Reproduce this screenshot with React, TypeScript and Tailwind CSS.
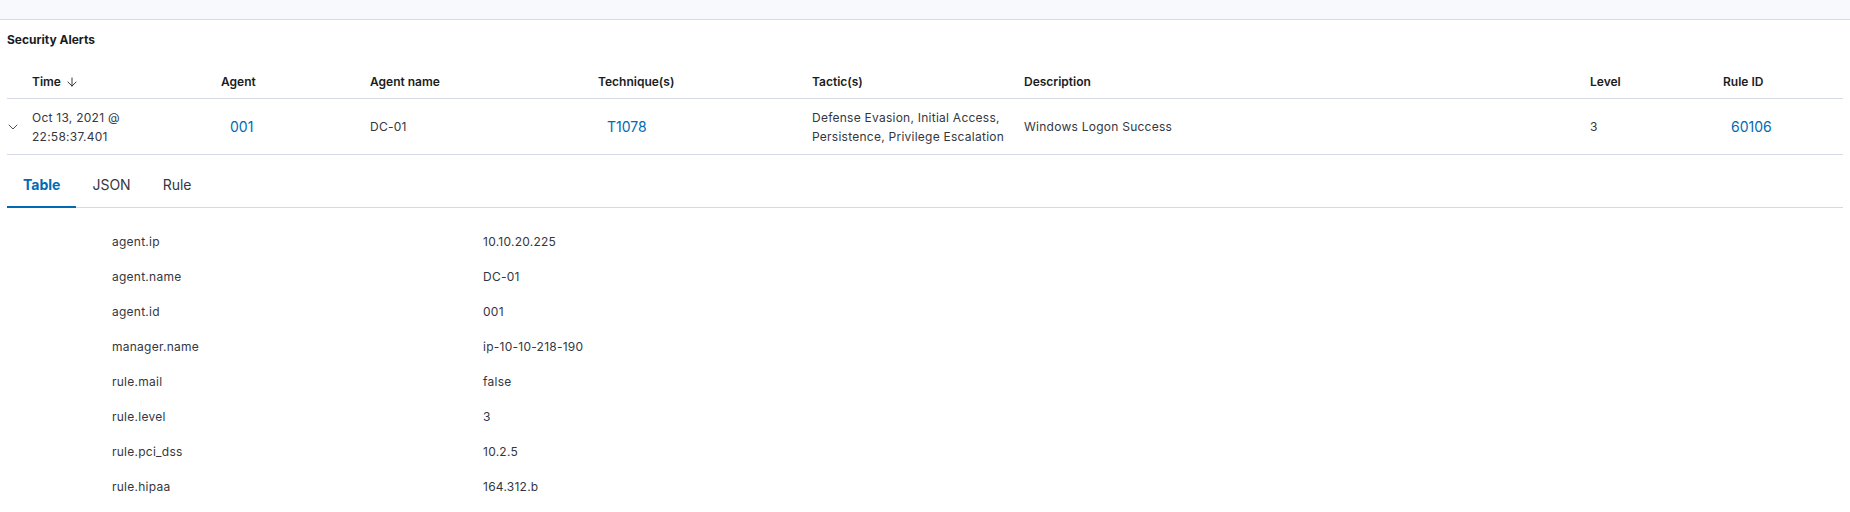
import React, { useState } from 'react';
import { ArrowDown, ChevronDown } from 'lucide-react';

const details: [string, string][] = [
  ['agent.ip', '10.10.20.225'],
  ['agent.name', 'DC-01'],
  ['agent.id', '001'],
  ['manager.name', 'ip-10-10-218-190'],
  ['rule.mail', 'false'],
  ['rule.level', '3'],
  ['rule.pci_dss', '10.2.5'],
  ['rule.hipaa', '164.312.b'],
];

const cols = 'grid grid-cols-[25px_189px_149px_228px_214px_212px_566px_133px_1fr]';

const App: React.FC = () => {
  const [tab, setTab] = useState('Table');

  return (
    <div className="min-h-screen bg-white text-[#343741]" style={{ fontFamily: 'Inter, "Noto Sans", sans-serif' }}>
      {/* Top strip */}
      <div className="h-[20px] bg-[#f8f9fc] border-b border-[#d3dae6]" />

      <div className="px-[7px]">
        <h2 className="pt-[12px] pb-[18px] text-xs leading-4 font-bold text-[#1a1c21]">Security Alerts</h2>

        {/* Header */}
        <div className={`${cols} h-[33px] items-center border-b border-[#d3dae6] text-xs font-semibold text-[#1a1c21]`}>
          <div />
          <div className="flex items-center gap-[4px]">
            Time <ArrowDown size={14} strokeWidth={1.5} />
          </div>
          <div>Agent</div>
          <div>Agent name</div>
          <div>Technique(s)</div>
          <div>Tactic(s)</div>
          <div>Description</div>
          <div>Level</div>
          <div>Rule ID</div>
        </div>

        {/* Alert row */}
        <div className={`${cols} h-[56px] items-center border-b border-[#d3dae6] text-xs leading-[19px] tracking-[0.25px]`}>
          <div className="-ml-[2px]">
            <ChevronDown size={16} strokeWidth={1.3} />
          </div>
          <div className="w-[125px]">Oct 13, 2021 @ 22:58:37.401</div>
          <div className="pl-[9px] text-sm tracking-normal text-[#006bb4]">001</div>
          <div>DC-01</div>
          <div className="pl-[9px] text-sm tracking-normal text-[#006bb4]">T1078</div>
          <div className="w-[205px]">Defense Evasion, Initial Access, Persistence, Privilege Escalation</div>
          <div>Windows Logon Success</div>
          <div>3</div>
          <div className="pl-[8px] text-sm tracking-normal text-[#006bb4]">60106</div>
        </div>

        {/* Tabs */}
        <div className="mt-[12px] flex border-b border-[#d3dae6]">
          {['Table', 'JSON', 'Rule'].map((t) => (
            <button
              key={t}
              onClick={() => setTab(t)}
              className={`h-[41px] px-4 pb-[4px] -mb-px text-sm border-b-2 ${
                tab === t
                  ? 'border-[#006bb4] text-[#006bb4] font-bold'
                  : 'border-transparent text-[#343741]'
              }`}
            >
              {t}
            </button>
          ))}
        </div>

        {/* Details */}
        <div className="pt-[16px] pl-[105px] text-xs tracking-[0.25px]">
          {details.map(([k, v]) => (
            <div key={k} className="flex h-[35px] items-center">
              <div className="w-[371px]">{k}</div>
              <div>{v}</div>
            </div>
          ))}
        </div>
      </div>
    </div>
  );
};

export default App;
